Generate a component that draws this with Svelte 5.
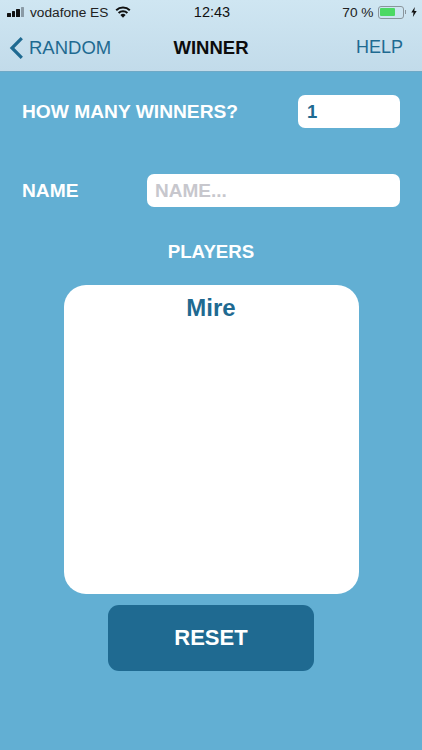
<script>
  const bars = [
    { h: 4 }, { h: 6 }, { h: 8 }, { h: 10 }
  ];
</script>

<div class="page">
  <header class="head">
    <div class="status">
      <div class="st-left">
        <div class="signal">
          {#each bars as b, i}
            <span class="bar" class:off={i === 3} style="height:{b.h}px"></span>
          {/each}
        </div>
        <span class="carrier">vodafone ES</span>
        <svg class="wifi" width="16" height="12" viewBox="0 0 16 12">
          <path d="M8 11.8 5.4 8.9a3.8 3.8 0 0 1 5.2 0z" fill="#111"/>
          <path d="M3.6 6.9a6.4 6.4 0 0 1 8.8 0" fill="none" stroke="#111" stroke-width="2"/>
          <path d="M1.2 4.3a9.9 9.9 0 0 1 13.6 0" fill="none" stroke="#111" stroke-width="2"/>
        </svg>
      </div>
      <span class="time">12:43</span>
      <div class="st-right">
        <span class="pct">70 %</span>
        <div class="battery"><div class="level"></div></div>
        <span class="nub"></span>
        <svg class="bolt" width="6" height="10" viewBox="0 0 6 10"><path d="M3.8 0 .3 5.6h2.2L1.9 10l3.8-6H3.3z" fill="#111"/></svg>
      </div>
    </div>
    <nav class="nav">
      <div class="back">
        <svg width="15" height="24" viewBox="0 0 15 24"><path d="M12.8 2.2 3 12l9.8 9.8" fill="none" stroke="#1f6a91" stroke-width="3.2"/></svg>
        <span>RANDOM</span>
      </div>
      <span class="title">WINNER</span>
      <span class="help">HELP</span>
    </nav>
  </header>

  <main class="main">
    <div class="row row-count">
      <span class="label">HOW MANY WINNERS?</span>
      <div class="field small">1</div>
    </div>
    <div class="row row-name">
      <span class="label">NAME</span>
      <div class="field wide">NAME...</div>
    </div>
    <div class="players">PLAYERS</div>
    <div class="card">Mire</div>
    <button class="reset">RESET</button>
  </main>
</div>

<style>
  :global(body) {
    margin: 0;
    background: #62afd3;
  }
  .page {
    width: 422px;
    height: 750px;
    overflow: hidden;
    display: flex;
    flex-direction: column;
    font-family: "Liberation Sans", Arial, sans-serif;
    background: #62afd3;
  }
  .head {
    height: 72px;
    box-sizing: border-box;
    background: linear-gradient(180deg, #cfe6f2 0%, #c2dbea 100%);
    border-bottom: 1px solid #6fa9c6;
    display: flex;
    flex-direction: column;
  }
  .status {
    height: 24px;
    display: grid;
    grid-template-columns: 1fr auto 1fr;
    align-items: center;
    padding: 0 5px 0 7px;
    font-size: 13.7px;
    color: #222;
  }
  .st-left {
    display: flex;
    align-items: center;
  }
  .signal {
    display: flex;
    align-items: flex-end;
    gap: 1px;
    height: 10px;
    margin-right: 6px;
  }
  .bar {
    width: 3.5px;
    background: #111;
    border-radius: 0.5px;
  }
  .bar.off {
    background: #8a9aa5;
  }
  .wifi {
    margin-left: 7px;
  }
  .time {
    font-size: 14.5px;
    color: #111;
  }
  .st-right {
    display: flex;
    align-items: center;
    justify-content: flex-end;
  }
  .pct {
    margin-right: 4px;
  }
  .battery {
    width: 26px;
    height: 13px;
    box-sizing: border-box;
    border: 1px solid #8a959c;
    border-radius: 3px;
    padding: 1.5px;
  }
  .level {
    width: 72%;
    height: 100%;
    background: #4cd964;
    border-radius: 1px;
  }
  .nub {
    width: 1.5px;
    height: 4px;
    background: #8a959c;
    margin: 0 5px 0 1px;
  }
  .nav {
    flex: 1;
    display: grid;
    grid-template-columns: 1fr auto 1fr;
    align-items: center;
    padding: 0 19px;
    font-size: 18.5px;
    color: #1f6a91;
  }
  .back {
    display: flex;
    align-items: center;
    gap: 5px;
    margin-left: -10px;
  }
  .title {
    font-weight: 700;
    color: #0c0c0c;
    font-size: 18.5px;
  }
  .help {
    justify-self: end;
    font-size: 18px;
  }
  .main {
    flex: 1;
    display: flex;
    flex-direction: column;
    align-items: center;
    padding: 23px 22px 0;
    color: #fff;
    font-weight: 700;
  }
  .row {
    align-self: stretch;
    display: flex;
    align-items: center;
    justify-content: space-between;
  }
  .row-name {
    margin-top: 46px;
  }
  .label {
    font-size: 19.2px;
  }
  .field {
    box-sizing: border-box;
    height: 33px;
    background: #fff;
    border-radius: 7px;
    display: flex;
    align-items: center;
    font-size: 18.5px;
  }
  .small {
    width: 102px;
    padding-left: 9px;
    color: #1f6a91;
  }
  .wide {
    width: 253px;
    padding-left: 8px;
    color: #c7c7cd;
    font-size: 19px;
  }
  .players {
    margin-top: 35px;
    font-size: 18.7px;
    line-height: 20px;
  }
  .card {
    box-sizing: border-box;
    margin-top: 23px;
    width: 295px;
    height: 309px;
    background: #fff;
    border-radius: 22px;
    padding-top: 9px;
    text-align: center;
    font-size: 24px;
    line-height: 28px;
    color: #1f6a91;
  }
  .reset {
    margin-top: 11px;
    width: 206px;
    height: 66px;
    border: none;
    border-radius: 11px;
    background: #1f6a91;
    color: #fff;
    font: 700 22px "Liberation Sans", Arial, sans-serif;
  }
</style>
